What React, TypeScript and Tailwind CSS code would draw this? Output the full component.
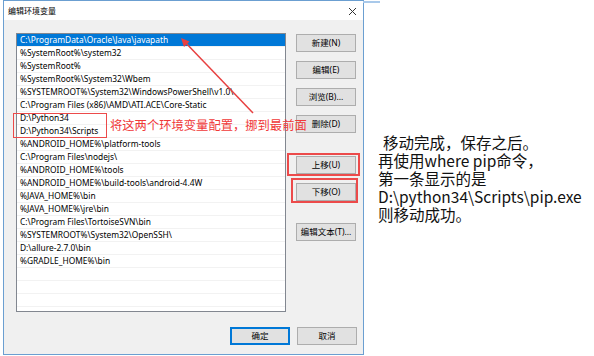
import React from 'react';

const paths = [
  "C:\\ProgramData\\Oracle\\Java\\javapath",
  "%SystemRoot%\\system32",
  "%SystemRoot%",
  "%SystemRoot%\\System32\\Wbem",
  "%SYSTEMROOT%\\System32\\WindowsPowerShell\\v1.0\\",
  "C:\\Program Files (x86)\\AMD\\ATI.ACE\\Core-Static",
  "D:\\Python34",
  "D:\\Python34\\Scripts",
  "%ANDROID_HOME%\\platform-tools",
  "C:\\Program Files\\nodejs\\",
  "%ANDROID_HOME%\\tools",
  "%ANDROID_HOME%\\build-tools\\android-4.4W",
  "%JAVA_HOME%\\bin",
  "%JAVA_HOME%\\jre\\bin",
  "C:\\Program Files\\TortoiseSVN\\bin",
  "%SYSTEMROOT%\\System32\\OpenSSH\\",
  "D:\\allure-2.7.0\\bin",
  "%GRADLE_HOME%\\bin",
];

const WinButton: React.FC<{ label: string; className?: string; primary?: boolean }> = ({ label, className = '', primary }) => (
  <div
    className={`h-[18px] w-[60px] flex items-center justify-center bg-[#e1e1e1] border text-[8.5px] text-black ${
      primary ? 'border-[#0078d7] shadow-[inset_0_0_0_1px_#0078d7]' : 'border-[#adadad]'
    } ${className}`}
  >
    {label}
  </div>
);

export default function App() {
  return (
    <div className="relative w-[594px] h-[356px] bg-white overflow-hidden flex font-[family-name:'Noto_Sans','Noto_Sans_CJK_SC',sans-serif]">
      {/* dialog */}
      <div className="ml-[3px] w-[361px] h-[355px] border border-[#6b9fd1] flex flex-col">
        <div className="h-[19px] bg-white flex items-center justify-between pl-[4px] pr-[6px]">
          <span className="text-[8px] text-black font-[family-name:'Noto_Sans_CJK_SC',sans-serif]">编辑环境变量</span>
          <svg width="9" height="9" viewBox="0 0 9 9" className="mt-[1px]">
            <path d="M1 1L8 8M8 1L1 8" stroke="#333" strokeWidth="1" />
          </svg>
        </div>
        <div className="flex-1 bg-[#f0f0f0] flex flex-col pl-[12px] pr-[6px] pt-[13px]">
          <div className="flex">
            <div className="w-[270px] h-[279px] border border-[#828790] bg-white overflow-hidden">
              {paths.map((p, i) => (
                <div
                  key={p}
                  className={`h-[13px] pl-[3px] flex items-center text-[8.4px] whitespace-nowrap border-b border-[#f2f2f2] ${
                    i === 0 ? 'bg-[#0078d7] text-white' : 'text-black'
                  }`}
                >
                  {p}
                </div>
              ))}
              {[0, 1, 2, 3].map((i) => (
                <div key={i} className="h-[13px] border-b border-[#f2f2f2]" />
              ))}
            </div>
            <div className="ml-[10px] flex flex-col">
              <WinButton label="新建(N)" className="mt-[1px]" />
              <WinButton label="编辑(E)" className="mt-[9px]" />
              <WinButton label="浏览(B)..." className="mt-[9px]" />
              <WinButton label="删除(D)" className="mt-[9px]" />
              <div className="relative mt-[23px]">
                <WinButton label="上移(U)" />
                <div className="absolute -left-[9px] -right-[4px] -top-[3px] -bottom-[2px] border-2 border-[#ec4a4a]" />
              </div>
              <div className="relative mt-[9px]">
                <WinButton label="下移(O)" />
                <div className="absolute -left-[5px] -right-[2px] -top-[5px] -bottom-[2px] border-2 border-[#ec4a4a]" />
              </div>
              <WinButton label="编辑文本(T)..." className="mt-[22px]" />
            </div>
          </div>
          <div className="flex justify-end gap-[7px] mt-[15px]">
            <WinButton label="确定" primary className="w-[58px] h-[17px]" />
            <WinButton label="取消" className="h-[17px]" />
          </div>
        </div>
      </div>

      {/* right note */}
      <div className="pl-[14px] pt-[133px] text-[15.5px] leading-[18px] text-[#111] font-[family-name:'Noto_Sans_CJK_SC',sans-serif]">
        <div className="pl-[5px]">移动完成，保存之后。</div>
        <div>再使用where pip命令，</div>
        <div>第一条显示的是</div>
        <div className="whitespace-nowrap">D:\python34\Scripts\pip.exe</div>
        <div>则移动成功。</div>
      </div>

      {/* annotations over the dialog */}
      <div className="absolute left-[363px] top-[1px] w-[17px] h-[2px] bg-[#a9c9ea]" />
      <div className="absolute left-[13px] top-[113px] w-[94px] h-[25px] border-[1.5px] border-[#ec4a4a]" />
      <div className="absolute left-[110px] top-[117px] text-[12.3px] leading-[16px] text-[#f03838] whitespace-nowrap font-[family-name:'Noto_Sans_CJK_SC',sans-serif]">
        将这两个环境变量配置，挪到最前面
      </div>
      <svg className="absolute left-0 top-0 pointer-events-none" width="594" height="356">
        <line x1="253" y1="113" x2="183" y2="40" stroke="#e84040" strokeWidth="1.5" />
        <polygon points="181,38 184,47 189.5,41.5" fill="#e84040" />
      </svg>
    </div>
  );
}
